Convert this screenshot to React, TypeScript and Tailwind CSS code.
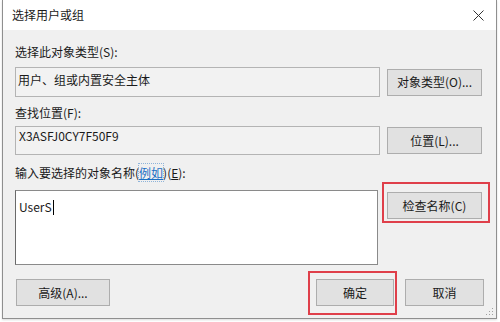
const FONT = "font-['Microsoft_YaHei','Noto_Sans_CJK_SC','Noto_Sans',sans-serif]";

function Btn({ label, className = '' }: { label: string; className?: string }) {
  return (
    <div
      className={`flex h-[27px] items-center justify-center border border-[#adadad] bg-[#e1e1e1] text-[12px] leading-[16px] text-[#1a1a1a] ${className}`}
    >
      {label}
    </div>
  );
}

export default function App() {
  return (
    <div className={`h-[322px] w-[500px] overflow-hidden bg-white ${FONT} text-[12px] leading-[16px] text-[#1a1a1a]`}>
      <div className="ml-[2px] flex h-[319px] w-[495px] flex-col border-x border-b border-[#8f8f8f] shadow-[0_1px_2px_rgba(0,0,0,0.15)]">
        {/* title bar */}
        <div className="flex h-[30px] shrink-0 items-center justify-between bg-white pl-[9px] pr-[10px]">
          <span className="text-[12px]">选择用户或组</span>
          <svg width="11" height="11" viewBox="0 0 11 11" className="mr-[2px]">
            <path d="M0.5 0.5 L10.5 10.5 M10.5 0.5 L0.5 10.5" stroke="#333" strokeWidth="1" />
          </svg>
        </div>

        {/* body */}
        <div className="relative flex flex-1 flex-col bg-[#f0f0f0] pl-[12px] pr-[12px]">
          {/* object type */}
          <div className="mt-[14px]">选择此对象类型(S):</div>
          <div className="mt-[7px] flex items-center gap-[7px]">
            <div className="h-[30px] w-[365px] border border-[#b4b4b4] bg-[#f2f2f2] pl-[2px] pt-[4px]">
              用户、组或内置安全主体
            </div>
            <Btn label="对象类型(O)..." className="w-[95px]" />
          </div>

          {/* location */}
          <div className="mt-[8px]">查找位置(F):</div>
          <div className="mt-[5px] flex items-center gap-[7px]">
            <div className="h-[29px] w-[365px] border border-[#b4b4b4] bg-[#f2f2f2] pl-[3px] pt-[1px]">
              X3ASFJ0CY7F50F9
            </div>
            <Btn label="位置(L)..." className="w-[95px]" />
          </div>

          {/* object names */}
          <div className="mt-[10px]">
            输入要选择的对象名称(
            <span className="text-[#1a6fc4] underline decoration-[#1a6fc4] outline-1 outline-dotted outline-[#8fb4da]">例如</span>
            )(<span className="underline">E</span>):
          </div>
          <div className="mt-[9px] flex items-start gap-[9px]">
            <div className="h-[75px] w-[363px] border border-[#8a8a8a] border-l-[#6a6a6a] bg-white pl-[3px] pt-[6px]">
              <span>UserS</span>
              <span className="ml-[1px] inline-block h-[15px] w-px translate-y-[3px] bg-black" />
            </div>
            <div className="relative mt-[2px]">
              <Btn label="检查名称(C)" className="w-[95px]" />
              <div className="pointer-events-none absolute -bottom-[4px] -left-[5px] -right-[8px] -top-[10px] border-2 border-[#df3f4a]" />
            </div>
          </div>

          {/* bottom buttons */}
          <div className="mt-[14px] flex items-center">
            <Btn label="高级(A)..." className="ml-[1px] w-[94px]" />
            <div className="ml-auto flex items-center gap-[11px]">
              <div className="relative">
                <Btn label="确定" className="w-[78px]" />
                <div className="pointer-events-none absolute -bottom-[9px] -left-[8px] -right-[3px] -top-[8px] border-2 border-[#df3f4a]" />
              </div>
              <Btn label="取消" className="w-[79px]" />
            </div>
          </div>

          {/* resize grip */}
          <svg width="8" height="8" viewBox="0 0 8 8" className="absolute bottom-[2px] right-[2px]">
            <rect x="6" y="0" width="1" height="1" fill="#a0a0a0" />
            <rect x="3" y="3" width="1" height="1" fill="#a0a0a0" />
            <rect x="6" y="3" width="1" height="1" fill="#a0a0a0" />
            <rect x="0" y="6" width="1" height="1" fill="#a0a0a0" />
            <rect x="3" y="6" width="1" height="1" fill="#a0a0a0" />
            <rect x="6" y="6" width="1" height="1" fill="#a0a0a0" />
          </svg>
        </div>
      </div>
    </div>
  );
}
